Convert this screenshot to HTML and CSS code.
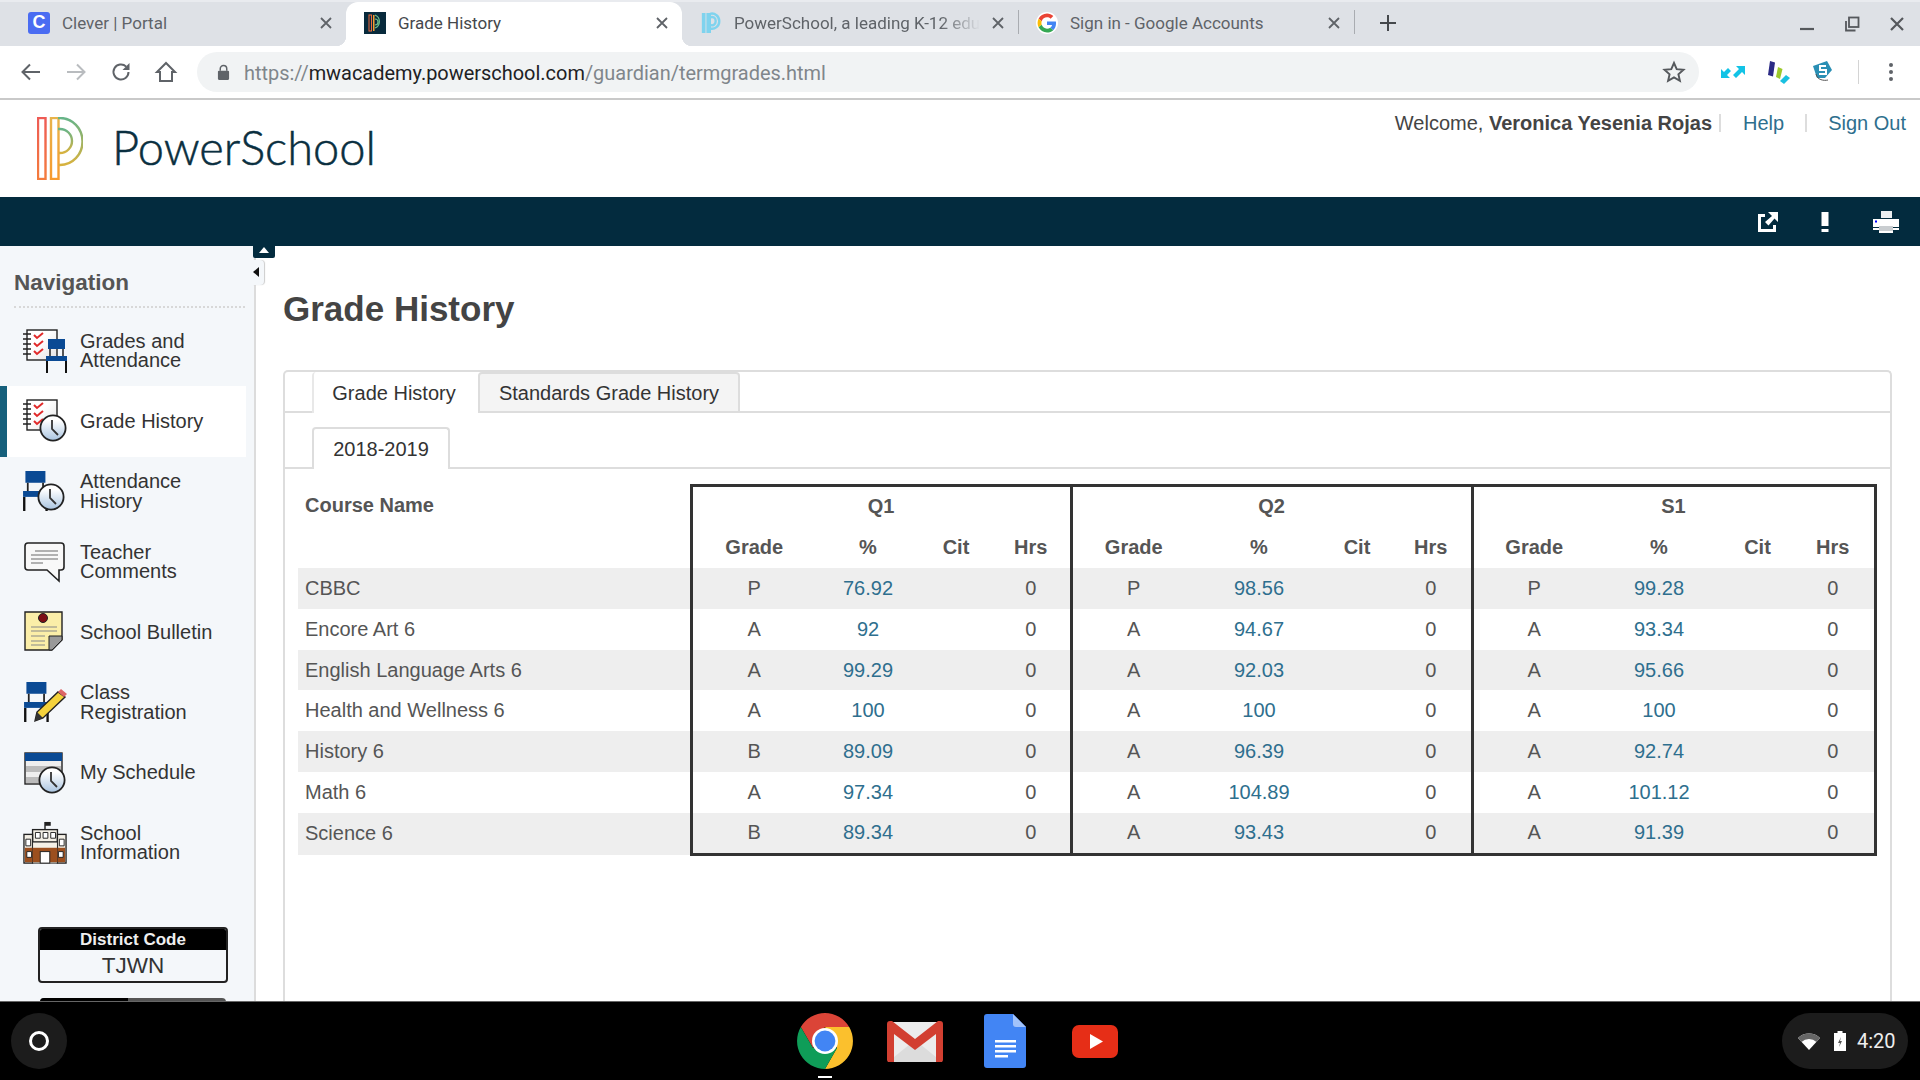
FILE: index.html
```html
<!DOCTYPE html>
<html lang="en">
<head>
<meta charset="utf-8">
<title>Grade History</title>
<link rel="stylesheet" href="styles.css">
</head>
<body>
<svg class="defs" width="0" height="0" aria-hidden="true">
  <defs>
    <linearGradient id="gClock" x1="0" y1="0" x2="0" y2="1"><stop offset="0.2" stop-color="#fff"/><stop offset="1" stop-color="#a9c4e0"/></linearGradient>
    <linearGradient id="gPaper" x1="0" y1="0" x2="1" y2="1"><stop offset="0.4" stop-color="#fff"/><stop offset="1" stop-color="#e2e2e2"/></linearGradient>
    <linearGradient id="gRed" x1="0" y1="0" x2="0" y2="1"><stop offset="0" stop-color="#ee5b55"/><stop offset="1" stop-color="#f47c3c"/></linearGradient>
    <linearGradient id="gYel" x1="0" y1="1" x2="0" y2="0"><stop offset="0" stop-color="#f79a2e"/><stop offset="1" stop-color="#e8b34a"/></linearGradient>
    <linearGradient id="gGrn" x1="0" y1="1" x2="0" y2="0"><stop offset="0" stop-color="#d8b23e"/><stop offset="1" stop-color="#66b488"/></linearGradient>
    <symbol id="clock" viewBox="0 0 28 28"><circle cx="14" cy="14" r="12.6" fill="url(#gClock)" stroke="#222" stroke-width="1.8"/><path d="M13 6v9l6 6" fill="none" stroke="#333" stroke-width="1.8"/></symbol>
    <symbol id="book" viewBox="0 0 36 34">
      <rect x="4" y="1" width="30" height="30" fill="url(#gPaper)" stroke="#222" stroke-width="1.4"/>
      <path d="M0 5h8M0 10h8M0 15h8M0 20h8M0 25h8" stroke="#222" stroke-width="1.6"/>
      <path d="M11 6l3 3 6-5M11 14l3 3 6-5M11 22l3 3 6-5" fill="none" stroke="#e02a2a" stroke-width="2"/>
    </symbol>
    <symbol id="chair" viewBox="0 0 22 34">
      <rect x="2" y="0" width="17" height="10" fill="#0a4a94"/>
      <path d="M4 10v8M17 10v8" stroke="#222" stroke-width="1.5"/>
      <rect x="0" y="17" width="21" height="5" fill="#0a4a94"/>
      <path d="M1 22v12M20 22v12" stroke="#111" stroke-width="2"/>
    </symbol>
  </defs>
</svg>

<div class="tabstrip">
  <div class="tab">
    <span class="fav fav-clever">C</span>
    <span class="tab-title">Clever | Portal</span>
    <svg class="tab-x" viewBox="0 0 12 12"><path d="M1 1l10 10M11 1L1 11"/></svg>
  </div>
  <div class="tab tab-active">
    <svg class="fav" viewBox="0 0 22 22"><rect width="22" height="22" fill="#082a3c"/><rect x="5" y="3" width="2.5" height="16" fill="none" stroke="#ef6a3c"/><rect x="9" y="3" width="1.5" height="16" fill="#f2a031"/><path d="M11 3a7 7 0 0 1 0 13M11 7a3 3 0 0 1 0 6" fill="none" stroke="#6cbf8a" stroke-width="1.2"/></svg>
    <span class="tab-title">Grade History</span>
    <svg class="tab-x" viewBox="0 0 12 12"><path d="M1 1l10 10M11 1L1 11"/></svg>
  </div>
  <div class="tab">
    <svg class="fav" viewBox="0 0 22 24"><path d="M1 1h4v22H1zM6 1h5v22H6z" fill="#7fd3ee"/><path d="M10 2a8 8 0 0 1 10 8 8 8 0 0 1-10 8M10 6a4 4 0 0 1 6 4 4 4 0 0 1-6 4" fill="none" stroke="#7fd3ee" stroke-width="2.6"/></svg>
    <span class="tab-title tab-fade">PowerSchool, a leading K-12 edu</span>
    <svg class="tab-x" viewBox="0 0 12 12"><path d="M1 1l10 10M11 1L1 11"/></svg>
  </div>
  <div class="tab tab-sep">
    <svg class="fav" viewBox="-4 -4 56 56"><circle cx="24" cy="24" r="28" fill="#fff"/><path fill="#EA4335" d="M24 9.5c3.54 0 6.71 1.22 9.21 3.6l6.85-6.85C35.9 2.38 30.47 0 24 0 14.62 0 6.51 5.38 2.56 13.22l7.98 6.19C12.43 13.72 17.74 9.5 24 9.5z"/><path fill="#4285F4" d="M46.98 24.55c0-1.57-.15-3.09-.38-4.55H24v9.02h12.94c-.58 2.96-2.26 5.48-4.78 7.18l7.73 6c4.51-4.18 7.09-10.36 7.09-17.65z"/><path fill="#FBBC05" d="M10.53 28.59c-.48-1.45-.76-2.99-.76-4.59s.27-3.14.76-4.59l-7.98-6.19C.92 16.46 0 20.12 0 24c0 3.88.92 7.54 2.56 10.78l7.97-6.19z"/><path fill="#34A853" d="M24 48c6.48 0 11.93-2.13 15.89-5.81l-7.73-6c-2.15 1.45-4.92 2.3-8.16 2.3-6.26 0-11.57-4.22-13.47-9.91l-7.98 6.19C6.51 42.62 14.62 48 24 48z"/></svg>
    <span class="tab-title">Sign in - Google Accounts</span>
    <svg class="tab-x" viewBox="0 0 12 12"><path d="M1 1l10 10M11 1L1 11"/></svg>
  </div>
  <svg class="newtab" viewBox="0 0 16 16"><path d="M8 0v16M0 8h16"/></svg>
  <div class="winctl">
    <svg viewBox="0 0 16 16"><path d="M1 13h14" stroke-width="2.2"/></svg>
    <svg viewBox="0 0 16 16"><rect x="5" y="1.5" width="9.5" height="9.5"/><path d="M2 5v9.5h9.5"/></svg>
    <svg viewBox="0 0 16 16"><path d="M2 2l12 12M14 2L2 14" stroke-width="2.2"/></svg>
  </div>
</div>

<div class="toolbar">
  <svg class="tb-icon" viewBox="0 0 24 24"><path d="M21 12H4M11 4.5L3.5 12l7.5 7.5"/></svg>
  <svg class="tb-icon tb-off" viewBox="0 0 24 24"><path d="M3 12h17M13 4.5l7.5 7.5-7.5 7.5"/></svg>
  <svg class="tb-icon" viewBox="0 0 24 24"><path d="M19.5 12a7.5 7.5 0 1 1-2.3-5.4"/><path class="tb-fill" d="M20.5 3v7h-7z"/></svg>
  <svg class="tb-icon" viewBox="0 0 24 24"><path d="M12 3L3 12h3v9h12v-9h3z"/></svg>
  <div class="omnibox">
    <svg class="lock" viewBox="0 0 14 18"><rect x="1" y="7" width="12" height="10" rx="1.2" fill="#5f6368"/><path d="M3.5 7V5a3.5 3.5 0 0 1 7 0v2" fill="none" stroke="#5f6368" stroke-width="1.6"/></svg>
    <span class="url"><span class="url-dim">https://</span>mwacademy.powerschool.com<span class="url-dim">/guardian/termgrades.html</span></span>
    <svg class="star" viewBox="0 0 24 24"><path d="M12 3l2.7 6.2 6.8.6-5.1 4.5 1.5 6.6L12 17.4l-5.9 3.5 1.5-6.6-5.1-4.5 6.8-.6z"/></svg>
  </div>
  <div class="exts">
    <svg viewBox="0 0 24 24"><g transform="translate(0 5)"><path d="M0 13V4l3 3 4-4 3 3-4 4 3 3z" fill="#12c3e6"/><path d="M24 1v9l-3-3-6 6-3-3 6-6-3-3z" fill="#12c3e6"/></g></svg>
    <svg viewBox="0 0 24 24"><path d="M4 1l5 1.5-2 14-5-1.5z" fill="#2b2a85"/><path d="M12 7l4.5 2-2.5 10-4-2z" fill="#9cc92c"/><path d="M20 15l4 3-6 6-4-3z" fill="#19c0e0"/></svg>
    <svg viewBox="0 0 24 24"><path d="M2 6L16 1l5 9-7 8H6z" fill="#2a8fb4"/><path d="M15 6H9v4h6v4H8" fill="none" stroke="#fff" stroke-width="2"/><path d="M5 14c1 6 8 7 12 6" fill="none" stroke="#555" stroke-width="1"/></svg>
  </div>
  <span class="tb-sep"></span>
  <svg class="tb-menu" viewBox="0 0 6 20"><circle cx="3" cy="3" r="2"/><circle cx="3" cy="10" r="2"/><circle cx="3" cy="17" r="2"/></svg>
</div>

<header class="ps-head">
  <svg class="logo" viewBox="0 0 46 63">
    <rect x="1" y="1" width="7.5" height="61" fill="none" stroke="url(#gRed)" stroke-width="2.4"/>
    <rect x="14" y="1" width="7.5" height="61" fill="none" stroke="url(#gYel)" stroke-width="2.4"/>
    <path d="M21 1h2a22.5 23.5 0 0 1 0 47h-1" fill="none" stroke="url(#gGrn)" stroke-width="2.4"/>
    <path d="M21 12h2a12 12 0 0 1 0 24h-1" fill="none" stroke="url(#gGrn)" stroke-width="2.4"/>
  </svg>
  <span class="wordmark">PowerSchool</span>
  <nav class="userbar">
    <span class="welcome">Welcome, <b>Veronica Yesenia Rojas</b></span>
    <span class="pipe pipe-a"></span>
    <a class="link">Help</a>
    <span class="pipe pipe-b"></span>
    <a class="link">Sign Out</a>
  </nav>
</header>

<div class="darkbar">
  <svg class="db-ext" viewBox="0 0 20 20"><path d="M7 3.5H1.5v15h15V13" fill="none" stroke="#fff" stroke-width="3"/><path d="M10 0h10v10l-3.5-3.5-6 7-3.5-3.5 7-6z" fill="#fff"/></svg>
  <svg class="db-ex" viewBox="0 0 8 20"><path d="M0.5 0h7v14h-7zM0.5 17h7v3h-7z" fill="#fff"/></svg>
  <svg class="db-print" viewBox="0 0 26 22"><path d="M8 0h11v7H8z" fill="#eceff1"/><path d="M0 8h26v8H0z" fill="#fff"/><path d="M6 15h14v5H6z" fill="#c9cdd0"/><path d="M0 17h6v2H0zM20 17h6v2h-6z" fill="#fff"/><path d="M6 20h14v2H6z" fill="#fff"/><rect x="2" y="9.5" width="2" height="2" fill="#00f"/></svg>
</div>

<div class="content">
  <aside class="sidebar">
    <button class="coll-up" aria-label="Collapse header"></button>
    <button class="coll-left" aria-label="Collapse navigation"></button>
    <h2 class="nav-title">Navigation</h2>
    <ul class="nav-list">
      <li class="nav-item">
        <svg class="nav-icon" viewBox="0 0 44 44"><use href="#book" x="0" y="0" width="36" height="34"/><use href="#chair" x="23" y="10" width="22" height="34"/></svg>
        <span>Grades and<br>Attendance</span>
      </li>
      <li class="nav-item nav-active">
        <svg class="nav-icon" viewBox="0 0 44 44"><use href="#book" x="0" y="0" width="36" height="34"/><use href="#clock" x="16" y="15" width="28" height="28"/></svg>
        <span>Grade History</span>
      </li>
      <li class="nav-item">
        <svg class="nav-icon" viewBox="0 0 44 44"><use href="#chair" x="0" y="1" width="26" height="40"/><use href="#clock" x="14" y="13" width="28" height="28"/></svg>
        <span>Attendance<br>History</span>
      </li>
      <li class="nav-item">
        <svg class="nav-icon" viewBox="0 0 44 44"><path d="M5 3h33a3 3 0 0 1 3 3v21a3 3 0 0 1-3 3h-2v11L24 30H5a3 3 0 0 1-3-3V6a3 3 0 0 1 3-3z" fill="#f8f8f8" stroke="#222" stroke-width="1.6"/><path d="M12 11h23M8 15h27M8 19h27M8 23h12" stroke="#999" stroke-width="1.3"/></svg>
        <span>Teacher<br>Comments</span>
      </li>
      <li class="nav-item">
        <svg class="nav-icon" viewBox="0 0 44 44"><path d="M2 2h37v28L29 40H2z" fill="#fbeea8" stroke="#222" stroke-width="1.4"/><path d="M39 26v4L29 40H26V26z" fill="#999" stroke="#222"/><path d="M8 17h26M8 21h26M8 26h14M8 31h14M8 35h14" stroke="#888" stroke-width="1.2"/><circle cx="20" cy="8" r="4.5" fill="#7d0f14" stroke="#222"/></svg>
        <span>School Bulletin</span>
      </li>
      <li class="nav-item">
        <svg class="nav-icon" viewBox="0 0 44 44"><use href="#chair" x="1" y="1" width="26" height="40"/><path d="M12 40l2-9 21-20 7 5-22 21z" fill="#f4d23c" stroke="#222" stroke-width="1.4"/><path d="M35 11l3-3 6 5-3 3z" fill="#d66"/><path d="M12 40l2-9 6 6z" fill="#333"/></svg>
        <span>Class<br>Registration</span>
      </li>
      <li class="nav-item">
        <svg class="nav-icon" viewBox="0 0 44 44"><rect x="2" y="2" width="37" height="31" fill="#eee" stroke="#222" stroke-width="1.4"/><rect x="2" y="2" width="37" height="8" fill="#0a4a94"/><rect x="3" y="15" width="35" height="6" fill="#bbb"/><rect x="3" y="26" width="35" height="6" fill="#bbb"/><use href="#clock" x="15" y="15" width="28" height="28"/></svg>
        <span>My Schedule</span>
      </li>
      <li class="nav-item">
        <svg class="nav-icon" viewBox="0 0 46 44"><path d="M23 0v8" stroke="#222" stroke-width="1.5"/><path d="M23 0h6v4h-6z" fill="#222"/><rect x="10" y="8" width="26" height="13" fill="#f4f0e6" stroke="#222" stroke-width="1.4"/><rect x="1" y="13" width="9" height="30" fill="#f4f0e6" stroke="#222" stroke-width="1.4"/><rect x="36" y="13" width="9" height="30" fill="#f4f0e6" stroke="#222" stroke-width="1.4"/><rect x="2" y="27" width="42" height="15" fill="#9c4f1e"/><rect x="10" y="21" width="26" height="22" fill="#f4f0e6" stroke="#222"/><rect x="10" y="27" width="26" height="15" fill="#9c4f1e"/><rect x="18" y="31" width="10" height="12" fill="#fff" stroke="#222"/><path d="M13 11h5v6h-5zM21 11h5v6h-5zM29 11h5v6h-5zM3 18h5v7H3zM38 18h5v7h-5zM4 31h5v6H4zM37 31h5v6h-5z" fill="#fff" stroke="#222"/></svg>
        <span>School<br>Information</span>
      </li>
    </ul>
    <div class="dcode">
      <div class="dcode-h">District Code</div>
      <div class="dcode-v">TJWN</div>
    </div>
    <div class="nextbox"><span></span></div>
  </aside>

  <main class="main">
    <h1 class="page-title">Grade History</h1>
    <section class="panel">
      <div class="tabs tabs-outer">
        <span class="ptab ptab-active ptab-gh">Grade History</span>
        <span class="ptab ptab-off">Standards Grade History</span>
      </div>
      <div class="tabs tabs-inner">
        <span class="ptab ptab-active ptab-yr">2018-2019</span>
      </div>
      <table class="grades">
        <colgroup>
          <col class="c-name">
          <col class="c-q1g"><col class="c-q1p"><col class="c-q1c"><col class="c-q1h">
          <col class="c-q2g"><col class="c-q2p"><col class="c-q2c"><col class="c-q2h">
          <col class="c-s1g"><col class="c-s1p"><col class="c-s1c"><col class="c-s1h">
        </colgroup>
        <thead>
          <tr class="r-top">
            <th class="th-name" rowspan="2">Course Name</th>
            <th colspan="4" class="box-top box-l box-r">Q1</th>
            <th colspan="4" class="box-top box-l box-r">Q2</th>
            <th colspan="4" class="box-top box-l box-r">S1</th>
          </tr>
          <tr>
            <th class="box-l">Grade</th><th>%</th><th>Cit</th><th class="box-r">Hrs</th>
            <th class="box-l">Grade</th><th>%</th><th>Cit</th><th class="box-r">Hrs</th>
            <th class="box-l">Grade</th><th>%</th><th>Cit</th><th class="box-r">Hrs</th>
          </tr>
        </thead>
        <tbody>
          <tr><td class="name">CBBC</td><td class="box-l">P</td><td><a class="link">76.92</a></td><td></td><td class="box-r">0</td><td class="box-l">P</td><td><a class="link">98.56</a></td><td></td><td class="box-r">0</td><td class="box-l">P</td><td><a class="link">99.28</a></td><td></td><td class="box-r">0</td></tr>
          <tr><td class="name">Encore Art 6</td><td class="box-l">A</td><td><a class="link">92</a></td><td></td><td class="box-r">0</td><td class="box-l">A</td><td><a class="link">94.67</a></td><td></td><td class="box-r">0</td><td class="box-l">A</td><td><a class="link">93.34</a></td><td></td><td class="box-r">0</td></tr>
          <tr><td class="name">English Language Arts 6</td><td class="box-l">A</td><td><a class="link">99.29</a></td><td></td><td class="box-r">0</td><td class="box-l">A</td><td><a class="link">92.03</a></td><td></td><td class="box-r">0</td><td class="box-l">A</td><td><a class="link">95.66</a></td><td></td><td class="box-r">0</td></tr>
          <tr><td class="name">Health and Wellness 6</td><td class="box-l">A</td><td><a class="link">100</a></td><td></td><td class="box-r">0</td><td class="box-l">A</td><td><a class="link">100</a></td><td></td><td class="box-r">0</td><td class="box-l">A</td><td><a class="link">100</a></td><td></td><td class="box-r">0</td></tr>
          <tr><td class="name">History 6</td><td class="box-l">B</td><td><a class="link">89.09</a></td><td></td><td class="box-r">0</td><td class="box-l">A</td><td><a class="link">96.39</a></td><td></td><td class="box-r">0</td><td class="box-l">A</td><td><a class="link">92.74</a></td><td></td><td class="box-r">0</td></tr>
          <tr><td class="name">Math 6</td><td class="box-l">A</td><td><a class="link">97.34</a></td><td></td><td class="box-r">0</td><td class="box-l">A</td><td><a class="link">104.89</a></td><td></td><td class="box-r">0</td><td class="box-l">A</td><td><a class="link">101.12</a></td><td></td><td class="box-r">0</td></tr>
          <tr class="r-last"><td class="name">Science 6</td><td class="box-l">B</td><td><a class="link">89.34</a></td><td></td><td class="box-r">0</td><td class="box-l">A</td><td><a class="link">93.43</a></td><td></td><td class="box-r">0</td><td class="box-l">A</td><td><a class="link">91.39</a></td><td></td><td class="box-r">0</td></tr>
        </tbody>
      </table>
    </section>
  </main>
</div>

<footer class="shelf">
  <div class="launcher"><span class="ring"></span></div>
  <div class="apps">
    <div class="app app-on">
      <svg class="ic-chrome" viewBox="0 0 56 56"><path fill="#db4437" d="M3.8 14A28 28 0 0 1 52.2 14H28L16 35z"/><path fill="#fbc02d" d="M52.2 14A28 28 0 0 1 28 56L40 35 28 14z"/><path fill="#0f9d58" d="M3.8 14A28 28 0 0 0 28 56L40 35H16z"/><circle cx="28" cy="28" r="13" fill="#fff"/><circle cx="28" cy="28" r="10.4" fill="#4285f4"/></svg>
    </div>
    <div class="app">
      <svg class="ic-gmail" viewBox="0 0 56 41"><rect x="1" y="1" width="54" height="40" rx="2" fill="#ececec"/><path d="M1 41L28 19l27 22z" fill="#dcdcdc"/><path d="M0 3a3 3 0 0 1 3-3h2l23 18L51 0h2a3 3 0 0 1 3 3v36a2 2 0 0 1-2 2h-5V13L28 29 7 13v28H2a2 2 0 0 1-2-2z" fill="#d23f31"/></svg>
    </div>
    <div class="app">
      <svg class="ic-docs" viewBox="0 0 42 54"><path d="M3 0h26l13 13v38a3 3 0 0 1-3 3H3a3 3 0 0 1-3-3V3a3 3 0 0 1 3-3z" fill="#4285f4"/><path d="M29 0l13 13H32a3 3 0 0 1-3-3z" fill="#a1c2fa"/><path d="M11 26h21v2.4H11zM11 31h21v2.4H11zM11 36h21v2.4H11zM11 41h13v2.4H11z" fill="#fff"/></svg>
    </div>
    <div class="app">
      <svg class="ic-yt" viewBox="0 0 46 33"><rect width="46" height="33" rx="7" fill="#e62e17"/><path d="M18 9l13 7.5L18 24z" fill="#fff"/></svg>
    </div>
  </div>
  <div class="status">
    <svg class="ic-wifi" viewBox="0 0 22 18"><path d="M0 6a16 16 0 0 1 22 0L11 18z" fill="#fff"/><path d="M0 6a16 16 0 0 1 22 0l-3.5 4a11 11 0 0 0-15 0z" fill="#666"/></svg>
    <svg class="ic-batt" viewBox="0 0 12 20"><path d="M3.5 0h5v2H12v18H0V2h3.5z" fill="#fff"/><path d="M7 6L4 12h2l-1 4 3-6H6z" fill="#555"/></svg>
    <span class="clock">4:20</span>
  </div>
</footer>
</body>
</html>
```

FILE: styles.css
```css
* { box-sizing: border-box; }
html, body { margin: 0; padding: 0; }
body {
  width: 1920px; height: 1080px; overflow: hidden;
  display: flex; flex-direction: column;
  font-family: "Liberation Sans", Arial, sans-serif;
  font-size: 20px; color: #444; background: #fff;
}
.defs { position: absolute; }

/* tab strip */
.tabstrip {
  height: 46px; flex: none; display: flex; align-items: center;
  padding-left: 10px; background: #dee1e6; border-top: 2px solid #e9ebef;
  font-family: Roboto, sans-serif; font-size: 17px; color: #5f6368;
}
.tab {
  width: 336px; height: 44px; flex: none; display: flex; align-items: center;
  padding: 0 0 3px 18px; position: relative; gap: 12px;
}
.tab-active { background: #fff; border-radius: 12px 12px 0 0; color: #45484c; }
.tab-active::before, .tab-active::after {
  content: ""; position: absolute; bottom: 0; width: 10px; height: 10px;
}
.tab-active::before { left: -10px; background: radial-gradient(circle at 0 0, transparent 10px, #fff 10.5px); }
.tab-active::after { right: -10px; background: radial-gradient(circle at 100% 0, transparent 10px, #fff 10.5px); }
.tab-sep::before, .tab-sep::after {
  content: ""; position: absolute; top: 8px; height: 24px; width: 1px; background: #a9acb1;
}
.tab-sep::before { left: 0; }
.tab-sep::after { right: -1px; }
.fav { width: 22px; height: 22px; flex: none; display: block; }
.fav-clever {
  background: #4a6cf2; border-radius: 3px; color: #fff; font-weight: 700; font-size: 18px;
  display: flex; align-items: center; justify-content: center; font-family: "Liberation Sans", sans-serif;
}
.tab-title { flex: 1; min-width: 0; white-space: nowrap; }
.tab-fade { overflow: hidden; -webkit-mask-image: linear-gradient(to right, #000 84%, transparent 100%); mask-image: linear-gradient(to right, #000 84%, transparent 100%); }
.tab-x { width: 12px; height: 12px; flex: none; margin-right: 14px; fill: none; stroke: #5f6368; stroke-width: 1.8; }
.newtab { width: 16px; height: 16px; flex: none; margin: 0 0 3px 26px; fill: none; stroke: #45484c; stroke-width: 2; }
.winctl { margin: 0 0 1px auto; display: flex; gap: 29px; padding-right: 15px; }
.winctl svg { width: 16px; height: 16px; fill: none; stroke: #55585c; stroke-width: 1.8; display: block; }

/* toolbar */
.toolbar {
  height: 54px; flex: none; display: flex; align-items: center; background: #fff;
  border-bottom: 2px solid #c9c9c9; padding: 0 0 0 19px;
}
.tb-icon { width: 24px; height: 24px; flex: none; margin-right: 21px; fill: none; stroke: #5f6368; stroke-width: 2; }
.tb-off { stroke: #b9bcbf; }
.tb-fill { fill: #5f6368; stroke: none; }
.omnibox {
  width: 1502px; height: 40px; flex: none; margin-left: -2px; background: #f1f3f4; border-radius: 20px;
  display: flex; align-items: center; padding: 0 13px 0 20px;
}
.lock { width: 13px; height: 17px; flex: none; margin-right: 14px; }
.url { font-family: Roboto, sans-serif; font-size: 19.95px; color: #202124; flex: 1; white-space: nowrap; padding-top: 2px; }
.url-dim { color: #80868b; }
.star { width: 24px; height: 24px; flex: none; fill: none; stroke: #55585c; stroke-width: 1.9; }
.exts { display: flex; gap: 21px; margin-left: 22px; flex: none; align-items: center; }
.exts svg { width: 24px; height: 24px; display: block; }
.tb-sep { width: 1px; height: 24px; background: #d4d4d4; margin-left: 23px; flex: none; }
.tb-menu { width: 6px; height: 20px; flex: none; margin-left: 29px; fill: #5f6368; }

/* PowerSchool header */
.ps-head { height: 97px; flex: none; display: flex; align-items: flex-start; position: relative; padding-left: 37px; }
.logo { width: 46px; height: 63px; margin-top: 17px; flex: none; }
.wordmark {
  margin-left: 29px; margin-top: 17px; font-family: Lato, sans-serif; font-weight: 300;
  font-size: 47px; line-height: 60px; color: #0a2f40; -webkit-text-stroke: 0.5px #0a2f40;
}
.userbar { margin-left: auto; display: flex; align-items: center; height: 24px; margin-top: 11px; padding-right: 14px; white-space: nowrap; color: #444; }
.welcome b { color: #444; }
.pipe { width: 2px; height: 18px; background: #ddd; flex: none; }
.pipe-a { margin: 0 22px 0 7px; }
.pipe-b { margin: 0 21px; }
.link { color: #2e6f8e; text-decoration: none; }

.darkbar {
  height: 49px; flex: none; background: #032b3e; display: flex; align-items: center; justify-content: flex-end; padding-right: 21px;
}
.db-ext { width: 20px; height: 20px; margin-right: 43px; }
.db-ex { width: 8px; height: 20px; margin-right: 44px; }
.db-print { width: 26px; height: 22px; }

/* body */
.content { flex: 1; min-height: 0; display: flex; overflow: hidden; }
.sidebar {
  width: 256px; flex: none; background: #f4f7fa; border-right: 2px solid #dcdcdc; position: relative; overflow: visible;
}
.coll-up {
  position: absolute; left: 253px; top: 0; width: 22px; height: 12px; border: 0; padding: 0;
  background: #032b3e; border-radius: 0 0 2px 2px; z-index: 2;
}
.coll-up::after { content: ""; position: absolute; left: 6px; top: 1px; border: 5px solid transparent; border-top: 0; border-bottom: 6px solid #fff; }
.coll-left {
  position: absolute; left: 252px; top: 14px; width: 12px; height: 25px; border: 0; padding: 0;
  background: #f4f7fa; border-radius: 0 4px 4px 0; box-shadow: 1px 0 1px #ccc; z-index: 2;
}
.coll-left::after { content: ""; position: absolute; left: 1px; top: 7px; border: 5px solid transparent; border-left: 0; border-right: 6px solid #111; }
.nav-title { margin: 0 9px 0 14px; height: 62px; padding-top: 23px; font-size: 22.5px; line-height: 28px; font-weight: 700; color: #555; border-bottom: 2px dotted #d8d8d8; }
.nav-list { list-style: none; margin: 8px 0 0; padding: 0; }
.nav-item {
  height: 70.33px; width: 246px; display: flex; align-items: center; padding-left: 23px; gap: 13px;
  line-height: 19.6px; font-size: 20px; color: #333;
}
.nav-active { background: #fff; border-left: 7px solid #16607c; padding-left: 16px; }
.nav-icon { width: 44px; height: 44px; flex: none; }
.dcode {
  margin: 48px 0 0 38px; width: 190px; height: 56px; border: 2px solid #222; border-radius: 4px; overflow: hidden; text-align: center;
}
.dcode-h { background: #000; color: #eee; font-weight: 700; font-size: 17px; line-height: 21px; height: 21px; }
.dcode-v { font-size: 22.5px; line-height: 31px; color: #333; }
.nextbox { margin: 15px 0 0 40px; width: 186px; height: 6px; background: #555; border-radius: 4px 4px 0 0; overflow: hidden; }
.nextbox span { display: block; width: 88px; height: 6px; background: #000; }

.main { flex: 1; min-width: 0; padding: 0 28px 0 27px; }
.page-title { margin: 0; padding-top: 41px; height: 124px; font-size: 35px; line-height: 43px; font-weight: 700; color: #444; }
.panel { border: 2px solid #ddd; border-bottom: 0; border-radius: 5px 5px 0 0; height: 700px; }
.tabs { display: flex; border-bottom: 2px solid #ddd; padding-left: 27px; }
.tabs-outer { height: 41px; }
.tabs-inner { height: 56px; padding-top: 14px; }
.ptab {
  display: flex; align-items: center; justify-content: center; font-size: 20px; color: #333;
  border: 2px solid #ddd; border-bottom: 0; border-radius: 4px 4px 0 0; height: calc(100% + 2px); background: #fff;
}
.ptab-gh { width: 166px; border-top: 0; border-left-color: #e8e8e8; border-right: 0; padding: 2px 4px 0 0; }
.ptab-off { width: 262px; background: #f4f4f4; border-bottom: 2px solid #ddd; padding-top: 2px; }
.ptab-yr { width: 138px; }

.grades { border-collapse: collapse; table-layout: fixed; width: 1578px; margin: 15px 0 0 13px; color: #555; }
.grades th, .grades td { padding: 0; text-align: center; height: 40.8px; font-size: 20px; }
.grades th { font-weight: 700; color: #555; }
.r-top th { height: 41.8px; padding-bottom: 2px; }
.r-last td { height: 42px; padding-bottom: 1px; }
.grades .th-name { text-align: left; padding-left: 7px; vertical-align: top; padding-top: 8px; color: #555; }
.grades .name { text-align: left; padding-left: 7px; }
.grades tbody tr:nth-child(odd) { background: #eee; }
.box-l { border-left: 3px solid #333; }
.box-r { border-right: 3px solid #333; }
.box-top { border-top: 3px solid #333; }
.r-last td:not(.name) { border-bottom: 3px solid #333; }
.c-name { width: 393px; }
.c-q1g { width: 125px; } .c-q1p { width: 104px; } .c-q1c { width: 72px; } .c-q1h { width: 79px; }
.c-q2g { width: 124px; } .c-q2p { width: 128px; } .c-q2c { width: 68px; } .c-q2h { width: 81px; }
.c-s1g { width: 123px; } .c-s1p { width: 128px; } .c-s1c { width: 69px; } .c-s1h { width: 83px; }

/* shelf */
.shelf {
  height: 79px; flex: none; background: #000; border-top: 1px solid #666; display: grid; grid-template-columns: 1fr auto 1fr; align-items: center; position: relative; z-index: 3;
}
.launcher { width: 56px; height: 56px; margin-left: 11px; border-radius: 50%; background: #1c1c1c; display: flex; align-items: center; justify-content: center; }
.ring { width: 20px; height: 20px; border: 3px solid #fff; border-radius: 50%; }
.apps { display: flex; }
.app { width: 90px; height: 78px; display: flex; align-items: center; justify-content: center; position: relative; }
.app-on::after { content: ""; position: absolute; left: 38px; bottom: 2px; width: 14px; height: 2px; background: #fff; }
.ic-chrome { width: 56px; height: 56px; }
.ic-gmail { width: 56px; height: 41px; }
.ic-docs { width: 42px; height: 54px; }
.ic-yt { width: 46px; height: 33px; }
.status {
  justify-self: end; margin-right: 12px; width: 126px; height: 56px; border-radius: 28px; background: #1c1c1c;
  display: flex; align-items: center; padding-left: 16px; color: #eee; font-family: Roboto, sans-serif; font-size: 20px;
}
.ic-wifi { width: 22px; height: 18px; flex: none; }
.ic-batt { width: 12px; height: 20px; flex: none; margin-left: 14px; }
.clock { margin-left: 11px; }
```
